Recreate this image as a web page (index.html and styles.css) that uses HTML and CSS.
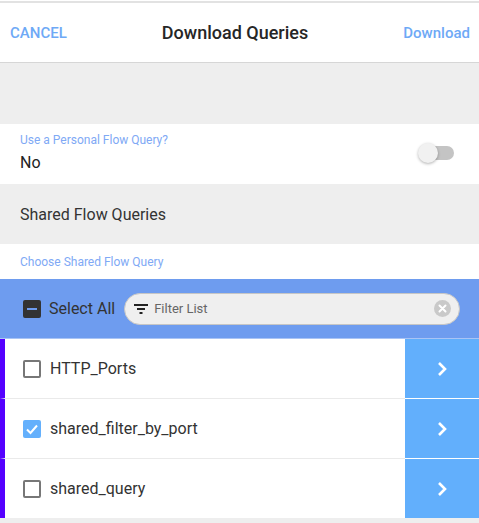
FILE: index.html
```html
<!DOCTYPE html>
<html lang="en">
<head>
<meta charset="UTF-8">
<title>Download Queries</title>
<link rel="stylesheet" href="styles.css">
</head>
<body>
<div class="page">
    <div class="header">
        <span class="header-btn">CANCEL</span>
        <span class="header-title">Download Queries</span>
        <span class="header-btn">Download</span>
    </div>
    <div class="spacer"></div>
    <div class="field">
        <div class="field-text">
            <div class="field-label">Use a Personal Flow Query?</div>
            <div class="field-value">No</div>
        </div>
        <div class="toggle">
            <div class="toggle-track"></div>
            <div class="toggle-thumb"></div>
        </div>
    </div>
    <div class="section-title">Shared Flow Queries</div>
    <div class="choose-label">Choose Shared Flow Query</div>
    <div class="toolbar">
        <span class="box box-minus"><span class="minus"></span></span>
        <span class="select-all">Select All</span>
        <div class="filter">
            <svg class="filter-icon" width="16" height="12" viewBox="0 0 16 12">
                <rect x="1" y="1" width="14" height="2" fill="#222"/>
                <rect x="4" y="5" width="8" height="2" fill="#222"/>
                <rect x="6.5" y="9" width="3" height="2" fill="#222"/>
            </svg>
            <span class="filter-text">Filter List</span>
            <svg class="clear-icon" width="17" height="17" viewBox="0 0 17 17">
                <circle cx="8.5" cy="8.5" r="8.5" fill="#c9c9c9"/>
                <path d="M5.5 5.5 L11.5 11.5 M11.5 5.5 L5.5 11.5" stroke="#fff" stroke-width="2" stroke-linecap="round"/>
            </svg>
        </div>
    </div>
    <div class="list">
        <div class="row">
            <div class="row-main">
                <span class="box"></span>
                <span class="row-name">HTTP_Ports</span>
            </div>
            <div class="row-go">
                <svg width="12" height="16" viewBox="0 0 12 16"><path d="M3 2 L9 8 L3 14" fill="none" stroke="#fff" stroke-width="2.6"/></svg>
            </div>
        </div>
        <div class="row">
            <div class="row-main">
                <span class="box box-checked">
                    <svg width="18" height="18" viewBox="0 0 18 18"><path d="M4 9.5 L7.5 13 L14 5.5" fill="none" stroke="#fff" stroke-width="2"/></svg>
                </span>
                <span class="row-name">shared_filter_by_port</span>
            </div>
            <div class="row-go">
                <svg width="12" height="16" viewBox="0 0 12 16"><path d="M3 2 L9 8 L3 14" fill="none" stroke="#fff" stroke-width="2.6"/></svg>
            </div>
        </div>
        <div class="row">
            <div class="row-main">
                <span class="box"></span>
                <span class="row-name">shared_query</span>
            </div>
            <div class="row-go">
                <svg width="12" height="16" viewBox="0 0 12 16"><path d="M3 2 L9 8 L3 14" fill="none" stroke="#fff" stroke-width="2.6"/></svg>
            </div>
        </div>
    </div>
</div>
</body>
</html>
```

FILE: styles.css
```css
body {
    margin: 0;
    font-family: Roboto, "Liberation Sans", sans-serif;
    background-color: #eeeeee;
    color: #333;
}
.page {
    padding-top: 1px;
    background-color: #fff;
}
.header {
    height: 59px;
    display: flex;
    align-items: center;
    justify-content: space-between;
    padding: 0 9px 0 10px;
    border-top: 2px solid #e2e2e2;
    border-bottom: 1px solid #d6d6d6;
    background-color: #fff;
}
.header-btn {
    color: #6ea9f6;
    font-size: 15px;
    font-weight: 500;
}
.header-title {
    font-size: 18px;
    font-weight: 500;
    color: #262626;
}
.spacer {
    height: 61px;
    background-color: #eeeeee;
}
.field {
    height: 60px;
    box-sizing: border-box;
    display: flex;
    align-items: center;
    justify-content: space-between;
    padding: 0 25px 3px 20px;
    background-color: #fff;
}
.field-label {
    font-size: 12px;
    color: #80a9f5;
}
.field-value {
    font-size: 16px;
    color: #222;
    margin-top: 6px;
}
.toggle {
    position: relative;
    width: 36px;
    height: 20px;
    margin-top: 1px;
}
.toggle-track {
    position: absolute;
    left: 2px;
    top: 3px;
    width: 34px;
    height: 14px;
    border-radius: 7px;
    background-color: #c4c4c4;
}
.toggle-thumb {
    position: absolute;
    left: 0;
    top: 0;
    width: 20px;
    height: 20px;
    border-radius: 50%;
    background-color: #f1f1f1;
    box-shadow: 0 1px 3px rgba(0, 0, 0, 0.3);
}
.section-title {
    height: 60px;
    display: flex;
    align-items: center;
    padding-left: 20px;
    font-size: 16px;
    color: #333;
    background-color: #eeeeee;
}
.choose-label {
    height: 35px;
    display: flex;
    align-items: center;
    padding-left: 20px;
    font-size: 12px;
    color: #80a9f5;
    background-color: #fff;
}
.toolbar {
    height: 59px;
    display: flex;
    align-items: center;
    padding: 0 19px 0 23px;
    background-color: #6e9cef;
    border-bottom: 1px solid #a9c4f5;
}
.box {
    width: 18px;
    height: 18px;
    box-sizing: border-box;
    border: 2px solid #777;
    border-radius: 2px;
    background-color: #fff;
    display: flex;
    align-items: center;
    justify-content: center;
    flex-shrink: 0;
}
.box-minus {
    background-color: #333;
    border-color: #333;
}
.minus {
    width: 10px;
    height: 2px;
    background-color: #6e9cef;
}
.box-checked {
    background-color: #64b0fc;
    border: none;
}
.select-all {
    font-size: 16px;
    color: #333;
    margin-left: 8px;
    margin-right: 9px;
}
.filter {
    flex: 1;
    height: 30px;
    display: flex;
    align-items: center;
    padding: 0 8px 0 8px;
    border: 1px solid #c6c6c6;
    border-radius: 16px;
    background-color: #efefef;
}
.filter-icon {
    margin-right: 5px;
}
.filter-text {
    flex: 1;
    font-size: 13px;
    color: #666;
}
.row {
    height: 59px;
    display: flex;
    border-left: 5px solid #5500ff;
    border-bottom: 1px solid #eaeaea;
    background-color: #fff;
}
.row:last-child {
    border-bottom: none;
}
.row-main {
    flex: 1;
    display: flex;
    align-items: center;
    padding-left: 18px;
}
.row-name {
    font-size: 16px;
    color: #333;
    margin-left: 9px;
}
.row-go {
    width: 74px;
    display: flex;
    align-items: center;
    justify-content: center;
    background-color: #62affc;
    box-shadow: 0 1px 0 #fff;
}
```
